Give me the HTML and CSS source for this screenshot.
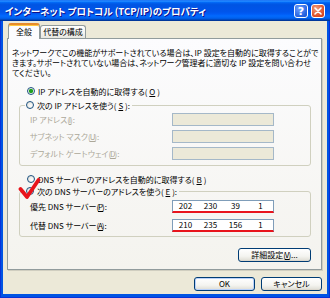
FILE: index.html
```html
<!DOCTYPE html>
<html lang="ja">
<head>
  <meta charset="UTF-8" />
  <title>インターネット プロトコル (TCP/IP)のプロパティ</title>
  <link rel="stylesheet" href="styles.css">
</head>
<body>
  <div class="window">
    <div class="titlebar">
      <span class="title">インターネット プロトコル (TCP/IP)のプロパティ</span>
      <div class="caption-buttons">
        <span class="cap-btn help">?</span>
        <span class="cap-btn close">
          <svg width="8" height="8" viewBox="0 0 8 8"><path d="M1 1 L7 7 M7 1 L1 7" stroke="#fff" stroke-width="1.6" stroke-linecap="round"/></svg>
        </span>
      </div>
    </div>

    <div class="client">
      <div class="tabs">
        <div class="tab active">全般</div>
        <div class="tab">代替の構成</div>
      </div>

      <div class="panel">
        <p class="intro">ネットワークでこの機能がサポートされている場合は、IP 設定を自動的に取得することがで<br>きます。サポートされていない場合は、ネットワーク管理者に適切な IP 設定を問い合わせ<br>てください。</p>

        <div class="radio top-radio"><span class="dot checked"></span>IP アドレスを自動的に取得する(<u>O</u>)</div>

        <fieldset class="group">
          <legend><span class="radio"><span class="dot"></span>次の IP アドレスを使う(<u>S</u>):</span></legend>
          <div class="rows">
            <div class="row disabled"><span>IP アドレス(<u>I</u>):</span><span class="ip"></span></div>
            <div class="row disabled"><span>サブネット マスク(<u>U</u>):</span><span class="ip"></span></div>
            <div class="row disabled"><span>デフォルト ゲートウェイ(<u>D</u>):</span><span class="ip"></span></div>
          </div>
        </fieldset>

        <div class="radio dns-radio"><span class="dot"></span>DNS サーバーのアドレスを自動的に取得する(<u>B</u>)</div>

        <fieldset class="group">
          <legend>
            <span class="radio marked-radio"><span class="dot"></span>次の DNS サーバーのアドレスを使う(<u>E</u>):
              <svg class="check" width="23" height="22" viewBox="0 0 23 22"><path d="M2.5 11 L9 19 L20.5 2" fill="none" stroke="#e8141c" stroke-width="3.8" stroke-linecap="round" stroke-linejoin="round"/></svg>
            </span>
          </legend>
          <div class="rows tall">
            <div class="row"><span>優先 DNS サーバー(<u>P</u>):</span><span class="ip active marked"><span>202</span><span>230</span><span>39</span><span>1</span></span></div>
            <div class="row"><span>代替 DNS サーバー(<u>A</u>):</span><span class="ip active marked"><span>210</span><span>235</span><span>156</span><span>1</span></span></div>
          </div>
        </fieldset>

        <div class="panel-actions">
          <button class="xp-btn wide">詳細設定(<u>V</u>)...</button>
        </div>
      </div>

      <div class="dialog-actions">
        <button class="xp-btn default">OK</button>
        <button class="xp-btn">キャンセル</button>
      </div>
    </div>
  </div>
</body>
</html>
```

FILE: styles.css
```css
body {
  margin: 0;
  font-family: "Noto Sans CJK JP", sans-serif;
  font-size: 8px;
  font-feature-settings: "palt" 1;
  color: #000;
}

u {
  margin: 0 -1.1px;
}

.window {
  width: 330px;
  height: 298px;
  display: flex;
  flex-direction: column;
  background: #0054e3;
  box-shadow: inset 1px 0 #0831d9, inset -1px 0 #0831d9, inset 0 -1px #0831d9;
}

.titlebar {
  height: 21px;
  flex: none;
  display: flex;
  align-items: center;
  padding: 0 5px;
  background: linear-gradient(#0058ee 0%, #3593ff 4%, #288eff 6%, #127dff 8%, #036ffc 10%, #0262ee 14%, #0057e5 20%, #0054e3 24%, #0055eb 56%, #005bf5 66%, #026afe 76%, #0062ef 86%, #0052d6 92%, #0040ab 94%, #003092 100%);
}

.title {
  flex: 1;
  color: #fff;
  font-weight: bold;
  font-size: 9.5px;
  text-shadow: 1px 1px #0f1089;
  white-space: nowrap;
}

.caption-buttons {
  display: flex;
  gap: 3px;
  margin-top: 1px;
}

.cap-btn {
  width: 14px;
  height: 14px;
  box-sizing: border-box;
  border: 1px solid #fff;
  border-radius: 3px;
  display: flex;
  align-items: center;
  justify-content: center;
  color: #fff;
  font-family: "DejaVu Sans", sans-serif;
  font-weight: bold;
  font-size: 11px;
}

.cap-btn.help {
  background: radial-gradient(circle at 35% 30%, #6fa0ff, #2663e0 70%, #1a4fc9);
}

.cap-btn.close {
  background: radial-gradient(circle at 35% 30%, #f0a080, #e0552e 60%, #c7391a);
}

.client {
  flex: 1;
  margin: 0 3px 4px;
  padding: 2px 5px 0 4px;
  background: #ece9d8;
  display: flex;
  flex-direction: column;
}

.tabs {
  height: 16px;
  display: flex;
  align-items: flex-end;
  padding-left: 1px;
  margin-bottom: -1px;
  position: relative;
  z-index: 1;
}

.tab {
  height: 13px;
  box-sizing: border-box;
  width: 46px;
  margin-bottom: 1px;
  border: 1px solid #919b9c;
  border-bottom: none;
  border-radius: 3px 3px 0 0;
  background: linear-gradient(#fff, #f3f3ef 60%, #e7e7e0);
  text-align: center;
  line-height: 12px;
}

.tab.active {
  width: 32px;
  height: 16px;
  margin-bottom: 0;
  background: #fcfcfe;
  border-top: 2px solid #e68b2c;
  box-shadow: inset 0 1px #ffc73c;
  line-height: 13px;
}

.panel {
  border: 1px solid #919b9c;
  background: linear-gradient(#fcfcfe, #f4f3ee);
  box-shadow: 1px 1px 0 #d0cec0;
  padding-bottom: 7px;
}

.intro {
  margin: 9px 0 0;
  padding-left: 4px;
  line-height: 10px;
  white-space: nowrap;
}

.radio {
  display: flex;
  align-items: center;
  gap: 3px;
  height: 12px;
  white-space: nowrap;
}

.top-radio {
  margin: 7px 0 0 19px;
}

.dns-radio {
  margin: 7px 0 0 19px;
}

.dot {
  width: 8px;
  height: 8px;
  box-sizing: border-box;
  border: 1px solid #1c5180;
  border-radius: 50%;
  background: radial-gradient(circle at 65% 65%, #fff, #dcdcd4);
}

.dot.checked {
  background: radial-gradient(circle, #21a121 0 1.6px, #5fc05f 2px, #f4f4f0 2.6px);
}

.group {
  margin: 2px 10px 0 11px;
  padding: 0 0 3px;
  border: 1px solid #d0d0bf;
  border-radius: 3px;
  min-width: 0;
}

.dns-radio + .group {
  margin-top: 0;
  padding-bottom: 1px;
}

.group legend {
  margin-left: 5px;
  padding: 0 2px 0 1px;
}

.marked-radio {
  position: relative;
}

.check {
  position: absolute;
  left: -8px;
  top: -7px;
}

.rows {
  padding-left: 10px;
}

.row {
  height: 17px;
  display: grid;
  grid-template-columns: 142px 102px;
  align-items: center;
  white-space: nowrap;
}

.rows.tall .row {
  height: 19px;
}

.row.disabled {
  color: #aca899;
}

.ip {
  height: 13px;
  box-sizing: border-box;
  border: 1px solid #a5b8c8;
  background: #ece9d8;
  display: grid;
  grid-template-columns: repeat(4, 1fr);
  text-align: center;
  line-height: 10px;
}

.ip.active {
  border-color: #7f9db9;
  background: #fff;
  color: #000;
}

.ip.marked {
  border-bottom: 2px solid #e8141c;
}

.panel-actions {
  display: flex;
  justify-content: flex-end;
  padding-right: 10px;
  margin-top: 11px;
}

.xp-btn {
  height: 14px;
  width: 61px;
  padding: 0;
  margin: 0;
  box-sizing: border-box;
  border: 1px solid #003c74;
  border-radius: 3px;
  background: linear-gradient(#fff, #f4f4f0 60%, #e3e2da 90%, #d6d0c5);
  font-family: inherit;
  font-size: 8px;
  font-feature-settings: "palt" 1;
  line-height: 12px;
  color: #000;
}

.xp-btn.wide {
  width: 73px;
}

.xp-btn.default {
  box-shadow: inset 0 0 0 1px #b9d1fa;
}

.dialog-actions {
  display: flex;
  justify-content: flex-end;
  gap: 6px;
  margin-top: 7px;
}
```
